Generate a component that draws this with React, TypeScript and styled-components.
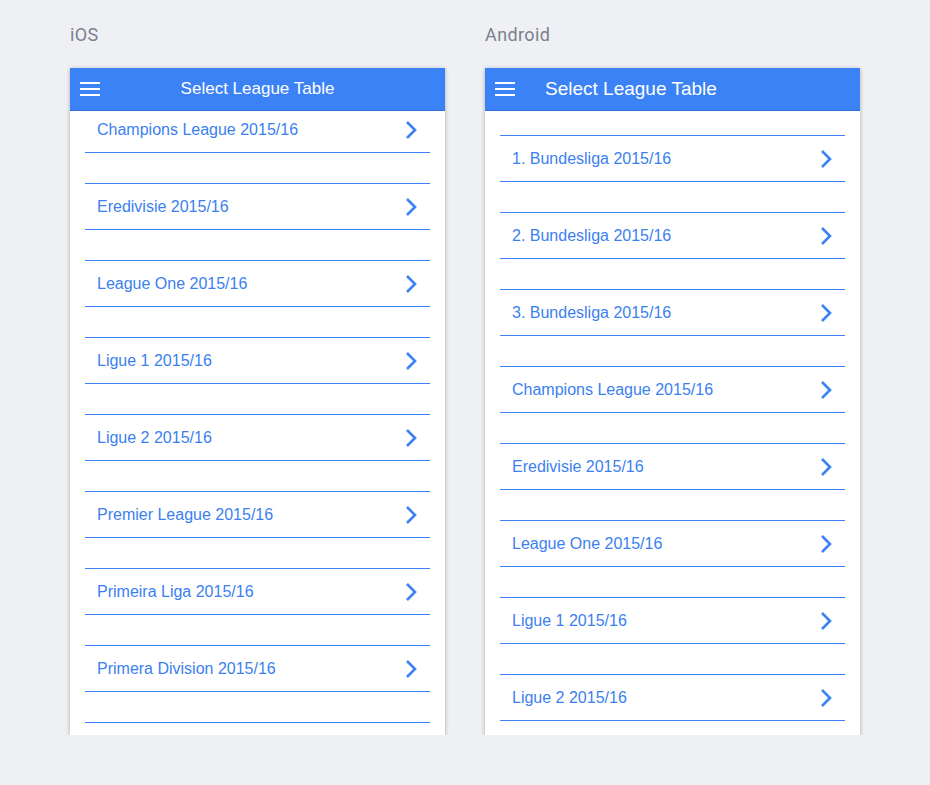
import React, { useEffect, useRef } from 'react';
import styled, { createGlobalStyle } from 'styled-components';

const GlobalStyle = createGlobalStyle`
    body {
        margin: 0;
        background: #eff0f4;
        font-family: 'Liberation Sans', Arial, sans-serif;
    }
`;

const Page = styled.div`
    display: flex;
    gap: 40px;
    padding: 24px 0 0 70px;
`;

const Column = styled.div`
    display: flex;
    flex-direction: column;
    width: 375px;
`;

const Platform = styled.h2`
    margin: 0 0 22px;
    height: 22px;
    font-family: Roboto, sans-serif;
    font-weight: 400;
    font-size: 18px;
    color: #7d7f8e;
    letter-spacing: 0.4px;
`;

const Phone = styled.div`
    display: flex;
    flex-direction: column;
    height: 667px;
    background: #fff;
    box-shadow: 0 1px 4px rgba(0, 0, 0, 0.3);
`;

const Header = styled.header<{ $centered?: boolean }>`
    display: flex;
    align-items: center;
    flex-shrink: 0;
    height: 42px;
    padding: 0 10px;
    background: #3b82f6;
    border-bottom: 1px solid #2c6fd8;
    color: #fff;
    font-size: ${(p) => (p.$centered ? '17px' : '19px')};
`;

const Title = styled.span<{ $centered?: boolean }>`
    flex: ${(p) => (p.$centered ? 1 : 'none')};
    text-align: center;
    margin-left: ${(p) => (p.$centered ? '0' : '30px')};
    margin-right: ${(p) => (p.$centered ? '20px' : '0')};
`;

const List = styled.div<{ $scroll?: boolean }>`
    flex: 1;
    overflow-y: ${(p) => (p.$scroll ? 'scroll' : 'hidden')};
    padding-top: 24px;
    &::-webkit-scrollbar {
        width: 15px;
    }
    &::-webkit-scrollbar-track {
        background: #f1f1f1;
    }
    &::-webkit-scrollbar-thumb {
        background: #c1c1c1;
        border: 3px solid #f1f1f1;
        border-top: 0;
        border-bottom: 0;
    }
    &::-webkit-scrollbar-button:single-button {
        display: block;
        height: 13px;
        background: #f1f1f1;
    }
`;

const Item = styled.div`
    display: flex;
    align-items: center;
    justify-content: space-between;
    height: 45px;
    margin: 0 15px 30px;
    padding: 0 13px 0 12px;
    border-top: 1px solid #3b82f6;
    border-bottom: 1px solid #3b82f6;
    color: #3b7ff0;
    font-size: 16px;
`;

const Menu = () => (
    <svg width="20" height="16" viewBox="0 0 20 16">
        <g stroke="#fff" strokeWidth="2">
            <line x1="0" y1="2" x2="20" y2="2" />
            <line x1="0" y1="8" x2="20" y2="8" />
            <line x1="0" y1="14" x2="20" y2="14" />
        </g>
    </svg>
);

const Chevron = () => (
    <svg width="12" height="20" viewBox="0 0 12 20">
        <path d="M2 2 L10 10 L2 18" fill="none" stroke="#3b82f6" strokeWidth="2.6" />
    </svg>
);

const leagues = [
    '1. Bundesliga 2015/16',
    '2. Bundesliga 2015/16',
    '3. Bundesliga 2015/16',
    'Champions League 2015/16',
    'Eredivisie 2015/16',
    'League One 2015/16',
    'Ligue 1 2015/16',
    'Ligue 2 2015/16',
    'Premier League 2015/16',
    'Primeira Liga 2015/16',
    'Primera Division 2015/16',
    'Serie A 2015/16',
];

const LeagueList: React.FC<{ scroll?: boolean; offset?: number }> = ({ scroll, offset = 0 }) => {
    const ref = useRef<HTMLDivElement>(null);
    useEffect(() => {
        if (ref.current) ref.current.scrollTop = offset;
    }, [offset]);
    return (
        <List ref={ref} $scroll={scroll}>
            {leagues.map((name) => (
                <Item key={name}>
                    {name}
                    <Chevron />
                </Item>
            ))}
        </List>
    );
};

const App: React.FC = () => (
    <>
        <GlobalStyle />
        <Page>
            <Column>
                <Platform>iOS</Platform>
                <Phone>
                    <Header $centered>
                        <Menu />
                        <Title $centered>Select League Table</Title>
                    </Header>
                    <LeagueList offset={260} />
                </Phone>
            </Column>
            <Column>
                <Platform>Android</Platform>
                <Phone>
                    <Header>
                        <Menu />
                        <Title>Select League Table</Title>
                    </Header>
                    <LeagueList scroll />
                </Phone>
            </Column>
        </Page>
    </>
);

export default App;
